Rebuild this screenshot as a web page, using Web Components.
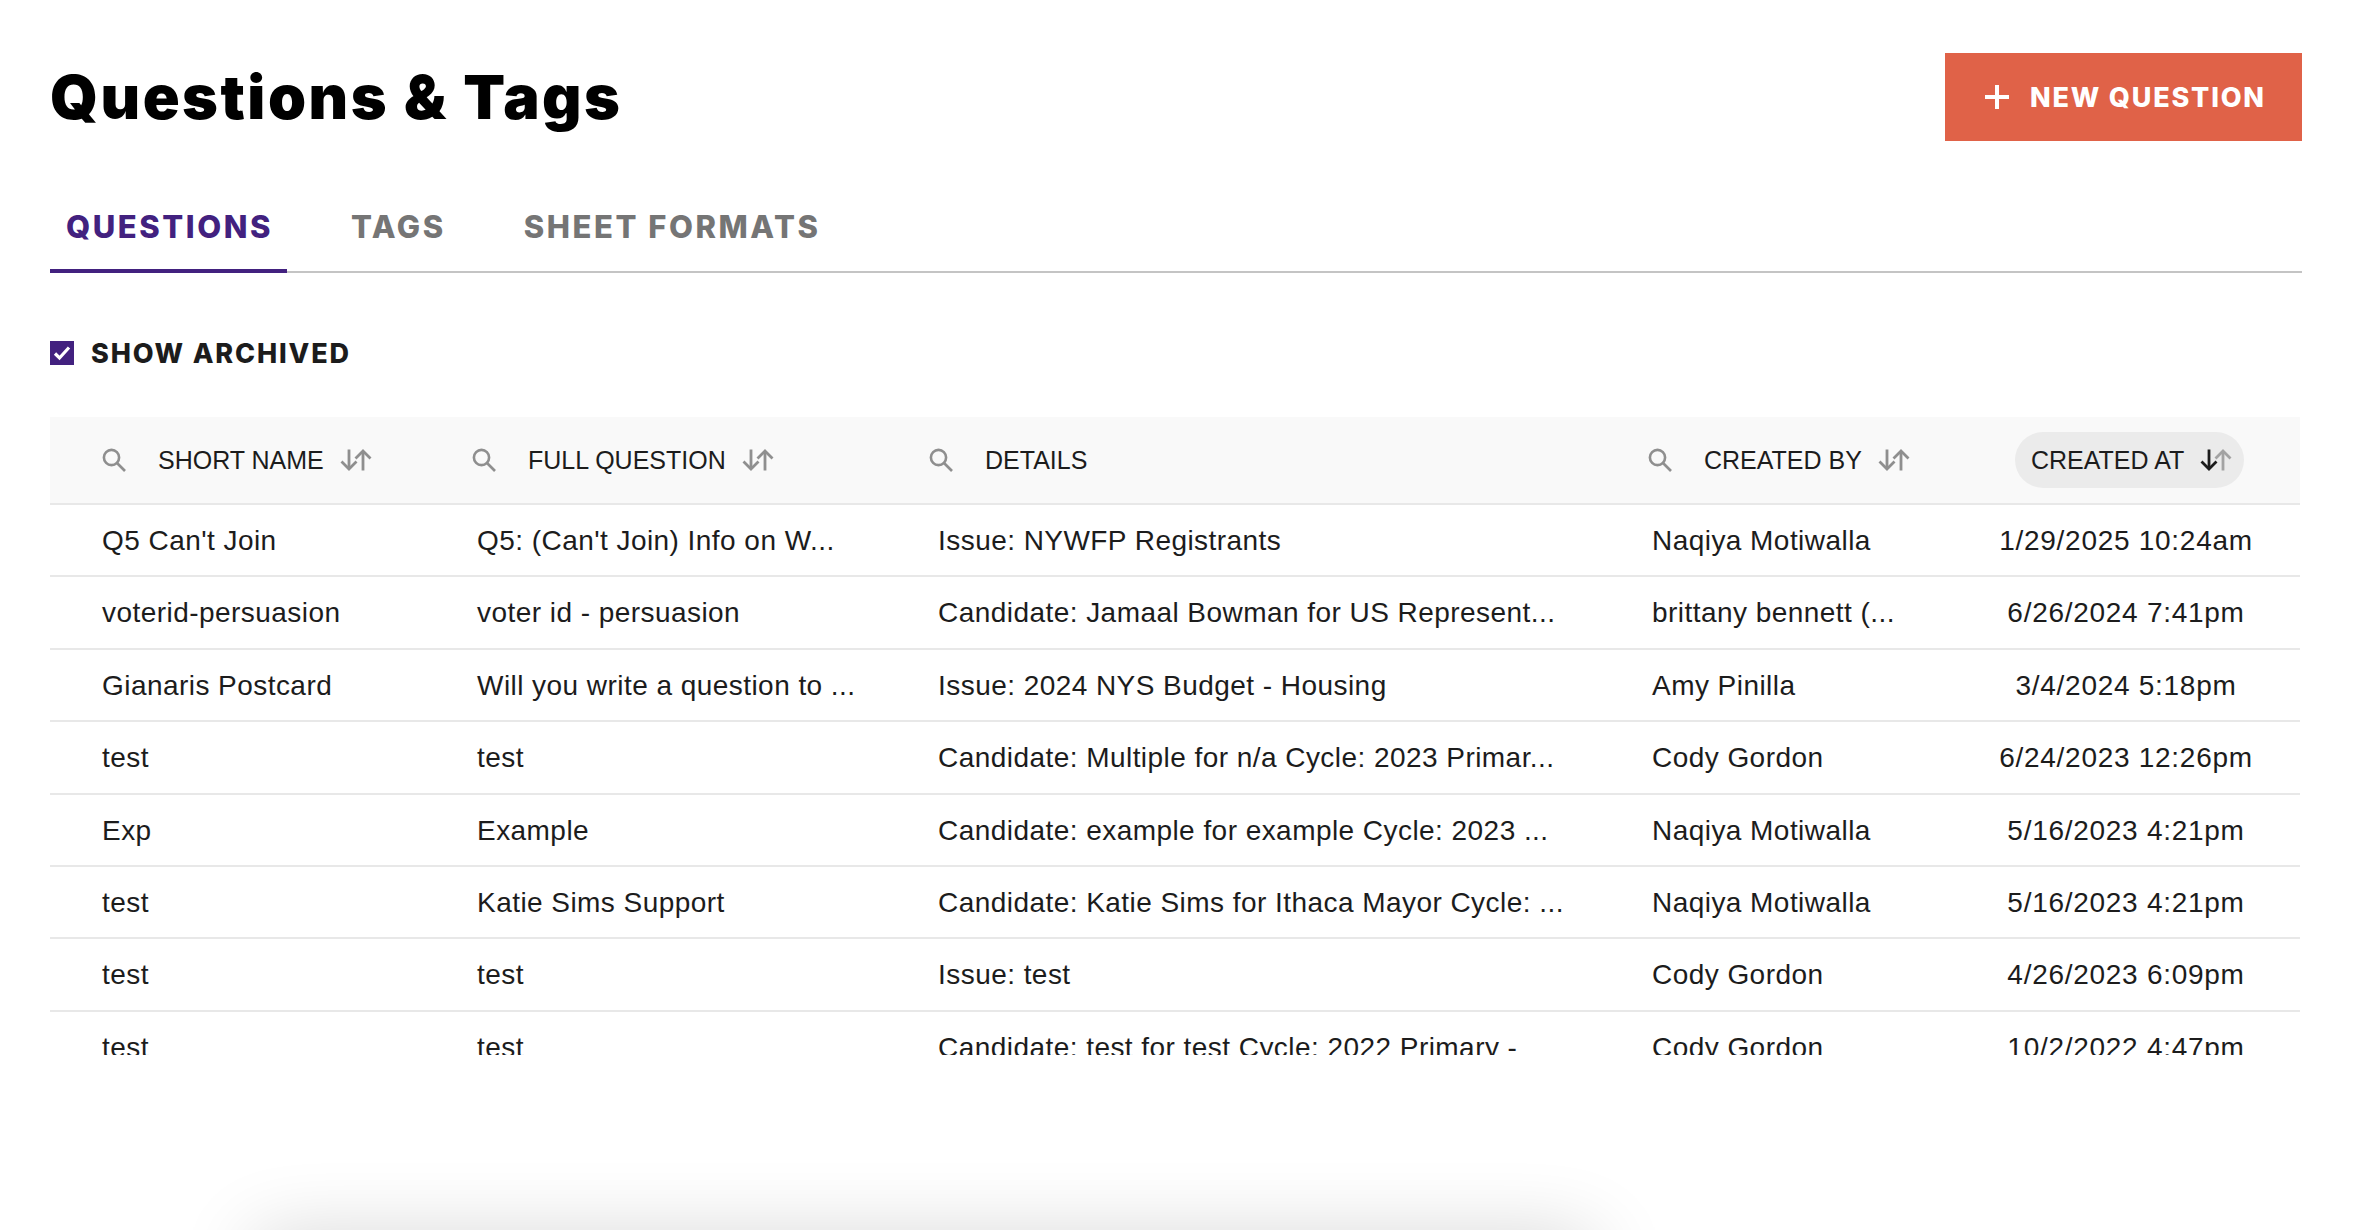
<!doctype html>
<html><head><meta charset="utf-8">
<style>
html,body{margin:0;padding:0;background:#fff;height:1230px;overflow:hidden}
body{font-family:"Liberation Sans",Arial,sans-serif;color:#1c1c1c}
</style></head><body>
<qt-page>
  <qt-header title="Questions &amp; Tags" action="NEW QUESTION"></qt-header>
  <qt-tabs>
    <qt-tab active>QUESTIONS</qt-tab>
    <qt-tab>TAGS</qt-tab>
    <qt-tab>SHEET FORMATS</qt-tab>
  </qt-tabs>
  <qt-check>SHOW ARCHIVED</qt-check>
  <qt-table></qt-table>
  <qt-peek></qt-peek>
</qt-page>
<script>
const SEARCH=`<svg width="24" height="24" viewBox="0 0 24 24" fill="none" stroke="#8f8f8f" stroke-width="2.6"><circle cx="9.5" cy="9.5" r="7.6"/><path d="M15 15l8 8"/></svg>`;
const sort=(dark)=>`<svg width="32" height="22" viewBox="0 0 32 22" fill="none" stroke-width="2.8"><g stroke="${dark?'#1c1c1c':'#8f8f8f'}"><path d="M9 0.5V20"/><path d="M1.5 12.5L9 20l7.5-7.5"/></g><g stroke="${dark?'#a3a3a3':'#8f8f8f'}"><path d="M23 21.5V2"/><path d="M15.5 9.5L23 2l7.5 7.5"/></g></svg>`;
function def(name,html,init){customElements.define(name,class extends HTMLElement{
  constructor(){super();this.attachShadow({mode:'open'}).innerHTML=html;}
  connectedCallback(){init&&init.call(this,this.shadowRoot);}
});}
def('qt-page',`<style>:host{display:block;padding:53px 58px 0 50px;height:1177px;overflow:hidden}</style><slot></slot>`);
def('qt-header',`<style>
:host{display:flex;justify-content:space-between;align-items:flex-start;height:88px}
h1{margin:0;font:900 61px/88px Inter,"Liberation Sans",sans-serif;color:#000;letter-spacing:2.5px}
button{all:unset;box-sizing:border-box;width:357px;height:88px;background:#e06248;color:#fff;display:flex;align-items:center;padding-left:40px;gap:21px;font:800 27px/1 Inter,"Liberation Sans",sans-serif;letter-spacing:1.8px}
svg{display:block}
</style><h1></h1><button><svg width="24" height="24" viewBox="0 0 24 24"><path d="M10 0h4v10h10v4H14v10h-4V14H0v-4h10z" fill="#fff"/></svg><span></span></button>`,
function(r){r.querySelector('h1').textContent=this.getAttribute('title');r.querySelector('span').textContent=this.getAttribute('action');});
def('qt-tabs',`<style>:host{display:flex;margin-top:40px;height:92px;box-sizing:border-box;border-bottom:2px solid #c4c4c4;gap:48px}</style><slot></slot>`);
def('qt-tab',`<style>
:host{display:block;padding:0 14px 0 16px;height:92px;box-sizing:border-box;font:800 31px/92px Inter,"Liberation Sans",sans-serif;letter-spacing:2.55px;color:#757575;margin-bottom:-2px}
:host([active]){color:#42217f;border-bottom:4px solid #42217f}
</style><slot></slot>`);
def('qt-check',`<style>
:host{display:flex;align-items:center;gap:17px;margin-top:68px;height:24px;font:800 27px/24px Inter,"Liberation Sans",sans-serif;letter-spacing:1.85px;color:#1c1c1c}
svg{display:block}
span{padding-top:2px}
</style><svg width="24" height="24" viewBox="0 0 24 24"><rect width="24" height="24" fill="#42217f"/><path d="M5 12.5l4.5 4.5 9.5-10.5" fill="none" stroke="#fff" stroke-width="3.2"/></svg><span><slot></slot></span>`);
const COLS='375px 461px 714px 360px 340px';
const ROWS=[
["Q5 Can't Join","Q5: (Can't Join) Info on W...","Issue: NYWFP Registrants","Naqiya Motiwalla","1/29/2025 10:24am"],
["voterid-persuasion","voter id - persuasion","Candidate: Jamaal Bowman for US Represent...","brittany bennett (...","6/26/2024 7:41pm"],
["Gianaris Postcard","Will you write a question to ...","Issue: 2024 NYS Budget - Housing","Amy Pinilla","3/4/2024 5:18pm"],
["test","test","Candidate: Multiple for n/a Cycle: 2023 Primar...","Cody Gordon","6/24/2023 12:26pm"],
["Exp","Example","Candidate: example for example Cycle: 2023 ...","Naqiya Motiwalla","5/16/2023 4:21pm"],
["test","Katie Sims Support","Candidate: Katie Sims for Ithaca Mayor Cycle: ...","Naqiya Motiwalla","5/16/2023 4:21pm"],
["test","test","Issue: test","Cody Gordon","4/26/2023 6:09pm"],
["test","test","Candidate: test for test Cycle: 2022 Primary -","Cody Gordon","10/2/2022 4:47pm"]];
def('qt-head-cell',`<style>
:host{display:flex;align-items:center;box-sizing:border-box;height:86px;font:400 25px/1 "Liberation Sans",sans-serif;color:#1c1c1c;white-space:nowrap}
.s{display:flex;margin-right:32px}.a{display:flex;margin-left:16px}
:host([active]) .w{background:#ebebeb;border-radius:28px;height:56px;padding:0 12px 0 16px;margin-left:55px}
.w{display:flex;align-items:center}
svg{display:block}
</style><span class="s"></span><span class="w"><slot></slot><span class="a"></span></span>`,
function(r){
 this.style.paddingLeft=(this.getAttribute('pad')||0)+'px';
 if(this.hasAttribute('search'))r.querySelector('.s').innerHTML=SEARCH;else r.querySelector('.s').style.display='none';
 if(this.hasAttribute('sort'))r.querySelector('.a').innerHTML=sort(this.hasAttribute('active'));
});
def('qt-row',`<style>
:host{display:grid;grid-template-columns:${COLS};height:72.4px;box-sizing:border-box;border-bottom:2px solid #e8e8e8;font:400 28px/71px "Liberation Sans",sans-serif;letter-spacing:.45px;color:#1c1c1c;white-space:nowrap}
div{padding-left:52px;overflow:hidden}
div:last-child{padding:0 8px 0 0;text-align:center;letter-spacing:.72px;overflow:visible}
</style><div></div><div></div><div></div><div></div><div></div>`,
function(r){const d=JSON.parse(this.dataset.c);r.querySelectorAll('div').forEach((e,i)=>e.textContent=d[i]);});
def('qt-table',`<style>
:host{display:block;margin-top:52px;width:2250px;height:638px;overflow:hidden}
.h{display:grid;grid-template-columns:${COLS};background:#f9f9f9;border-bottom:2px solid #e8e8e8}
</style><div class="h">
<qt-head-cell search sort pad="52">SHORT NAME</qt-head-cell>
<qt-head-cell search sort pad="47">FULL QUESTION</qt-head-cell>
<qt-head-cell search pad="43">DETAILS</qt-head-cell>
<qt-head-cell search sort pad="48">CREATED BY</qt-head-cell>
<qt-head-cell sort active>CREATED AT</qt-head-cell>
</div><div class="b"></div>`,
function(r){const b=r.querySelector('.b');ROWS.forEach(d=>{const e=document.createElement('qt-row');e.dataset.c=JSON.stringify(d);b.appendChild(e);});});
def('qt-peek',`<style>:host{display:block;margin:185px 0 0 206px;width:1336px;height:60px;background:#fff;box-shadow:0 0 80px rgba(0,0,0,.2)}</style>`);
</script>
</body></html>
